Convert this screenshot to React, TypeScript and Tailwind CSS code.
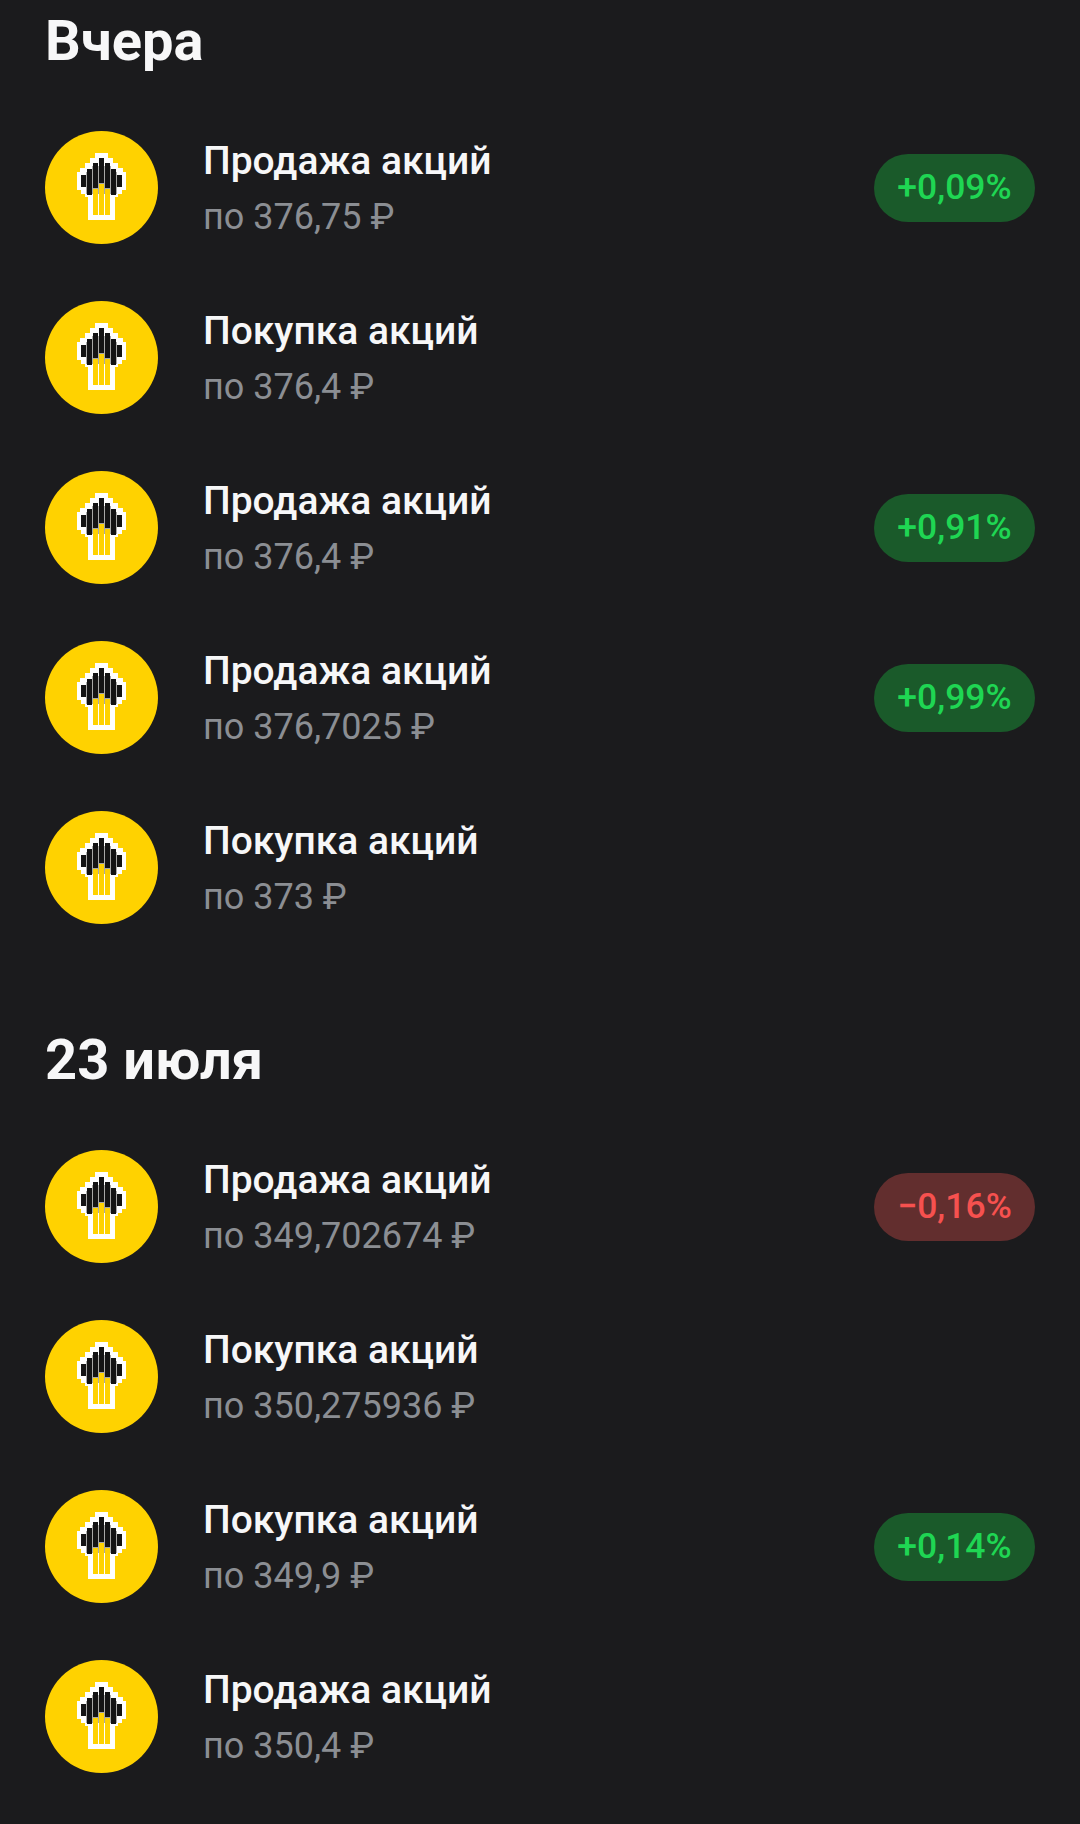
const Logo = () => (
  <div className="flex h-[113px] w-[113px] shrink-0 items-center justify-center rounded-full bg-[#ffd200]">
    <svg width="73" height="73" viewBox="65 151 73 73">
      <path
        fill="#fff"
        d="M95 153H108V158H113V163H118V168H123V172H126V190H122V194H118V197H115V220H88V197H85V194H81V190H77V172H80V168H85V163H90V158H95Z"
      />
      <g fill="#a8a8a6">
        <rect x="86" y="172" width="31" height="22" />
        <rect x="92" y="166" width="19" height="20" />
      </g>
      <g fill="#141414">
        <rect x="81" y="175" width="5" height="12" />
        <rect x="87" y="169" width="5" height="26" />
        <rect x="93" y="163" width="5" height="25" />
        <rect x="99" y="158" width="5" height="25" />
        <rect x="105" y="163" width="5" height="25" />
        <rect x="111" y="169" width="5" height="26" />
        <rect x="117" y="175" width="5" height="12" />
      </g>
      <g fill="#ffd200">
        <rect x="93" y="189" width="5" height="26" />
        <rect x="99" y="184" width="5" height="31" />
        <rect x="105" y="189" width="5" height="26" />
      </g>
    </svg>
  </div>
);

type RowData = { title: string; price: string; badge?: string; down?: boolean };

const Row = ({ title, price, badge, down }: RowData) => (
  <div className="flex h-[170px] items-center pl-[45px] pr-[45px]">
    <Logo />
    <div className="ml-[45px] flex-1 pt-[3px]">
      <div className="text-[39px] leading-[56px] font-medium text-[#f7f7f8]">{title}</div>
      <div className="text-[36px] leading-[56px] text-[#8b8e93]">{price}</div>
    </div>
    {badge && (
      <div
        className={
          down
            ? "mt-[1px] flex h-[68px] w-[161px] items-center justify-center rounded-full bg-[#622e2e] text-[35.5px] font-medium text-[#f6514f]"
            : "mt-[1px] flex h-[68px] w-[161px] items-center justify-center rounded-full bg-[#1a5a2a] text-[35.5px] font-medium text-[#1fd653]"
        }
      >
        {badge}
      </div>
    )}
  </div>
);

const yesterday: RowData[] = [
  { title: "Продажа акций", price: "по 376,75 ₽", badge: "+0,09%" },
  { title: "Покупка акций", price: "по 376,4 ₽" },
  { title: "Продажа акций", price: "по 376,4 ₽", badge: "+0,91%" },
  { title: "Продажа акций", price: "по 376,7025 ₽", badge: "+0,99%" },
  { title: "Покупка акций", price: "по 373 ₽" },
];

const july: RowData[] = [
  { title: "Продажа акций", price: "по 349,702674 ₽", badge: "−0,16%", down: true },
  { title: "Покупка акций", price: "по 350,275936 ₽" },
  { title: "Покупка акций", price: "по 349,9 ₽", badge: "+0,14%" },
  { title: "Продажа акций", price: "по 350,4 ₽" },
];

export default function App() {
  return (
    <div className="h-[1824px] overflow-hidden bg-[#1b1b1d] font-['Roboto',sans-serif]">
      <h2 className="h-[80px] pl-[45px] text-[56px] leading-[82px] font-bold text-[#f7f7f8]">Вчера</h2>
      <div className="mt-[22px]">
        {yesterday.map((r, i) => (
          <Row key={i} {...r} />
        ))}
      </div>
      <h2 className="mt-[68px] h-[80px] pl-[45px] text-[56px] leading-[80px] font-bold text-[#f7f7f8]">23 июля</h2>
      <div className="mt-[21px]">
        {july.map((r, i) => (
          <Row key={i} {...r} />
        ))}
      </div>
    </div>
  );
}
